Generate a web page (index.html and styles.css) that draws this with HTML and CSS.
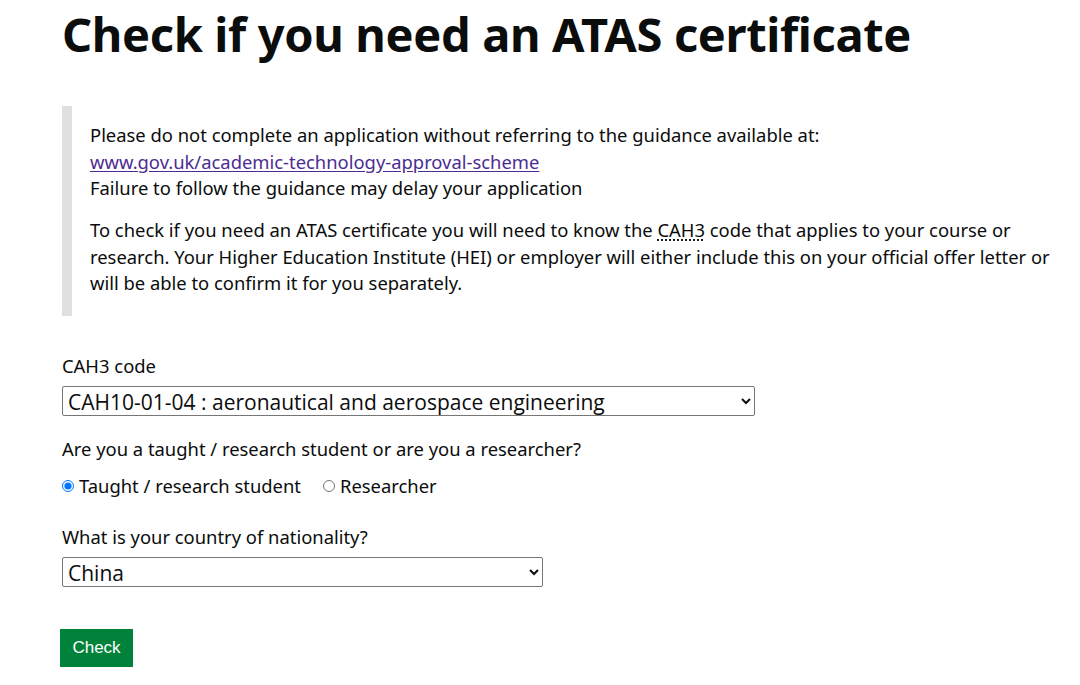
FILE: index.html
```html
<!DOCTYPE html>
<html lang="en">
<head>
<meta charset="utf-8">
<title>Check if you need an ATAS certificate</title>
<link rel="stylesheet" href="styles.css">
</head>
<body>
<main class="page">
  <h1 class="title">Check if you need an ATAS certificate</h1>
  <div class="inset">
    <p class="para">Please do not complete an application without referring to the guidance available at:<br>
    <a class="link" href="#">www.gov.uk/academic-technology-approval-scheme</a><br>
    Failure to follow the guidance may delay your application</p>
    <p class="para">To check if you need an ATAS certificate you will need to know the <span class="abbr" title="Common Aggregation Hierarchy">CAH3</span> code that applies to your course or research. Your Higher Education Institute (HEI) or employer will either include this on your official offer letter or will be able to confirm it for you separately.</p>
  </div>
  <form class="form">
    <div class="field field-cah">
      <label class="label" for="cah">CAH3 code</label>
      <select class="select select-wide" id="cah">
        <option>CAH10-01-04 : aeronautical and aerospace engineering</option>
      </select>
    </div>
    <div class="field field-role">
      <div class="label">Are you a taught / research student or are you a researcher?</div>
      <div class="radios">
        <label class="radio"><input type="radio" name="role" checked> Taught / research student</label>
        <label class="radio"><input type="radio" name="role"> Researcher</label>
      </div>
    </div>
    <div class="field field-nat">
      <label class="label" for="nat">What is your country of nationality?</label>
      <select class="select select-mid" id="nat">
        <option>China</option>
      </select>
    </div>
    <button class="button" type="button">Check</button>
  </form>
</main>
</body>
</html>
```
FILE: styles.css
```css
html, body {
  margin: 0;
  padding: 0;
  background: #ffffff;
}
body {
  font-family: "Noto Sans", "Liberation Sans", sans-serif;
  color: #0b0c0c;
}
.page {
  padding: 0 20px 0 62px;
  display: flex;
  flex-direction: column;
  align-items: flex-start;
}
.title {
  margin: 7px 0 0;
  font-size: 47px;
  line-height: 55px;
  font-weight: 700;
  letter-spacing: -0.35px;
}
.inset {
  margin-top: 44px;
  border-left: 10px solid #dee0e2;
  padding: 16px 0 19px 18px;
  width: 960px;
}
.para {
  margin: 0;
  font-size: 18.4px;
  line-height: 26.5px;
}
.para + .para {
  margin-top: 15.5px;
}
.link {
  color: #4c2c92;
  text-decoration: underline;
  text-underline-offset: 2px;
}
.abbr {
  text-decoration: underline dotted;
  text-underline-offset: 3px;
}
.form {
  margin-top: 38px;
  display: flex;
  flex-direction: column;
  align-items: flex-start;
}
.field {
  display: flex;
  flex-direction: column;
  align-items: flex-start;
}
.label {
  font-size: 18.4px;
  line-height: 24px;
  margin-bottom: 8px;
}
.select {
  font-family: "Open Sans", "Noto Sans", sans-serif;
  font-size: 21px;
  height: 30px;
  padding: 0 0 0 1px;
  border: 1px solid #767676;
  border-radius: 2px;
  background: #ffffff;
  color: #0b0c0c;
}
.select-wide { width: 693px; }
.select-mid { width: 481px; }
.field-role { margin-top: 21px; }
.radios {
  display: flex;
  gap: 22px;
  font-size: 18.4px;
  line-height: 24px;
  margin-top: 5px;
}
.radio {
  display: flex;
  align-items: center;
  gap: 5px;
}
.radio input {
  margin: 0;
  width: 12px;
  height: 12px;
}
.field-nat { margin-top: 27px; }
.button {
  margin-top: 42px;
  margin-left: -2px;
  font-family: "Liberation Sans", Arial, sans-serif;
  font-size: 17px;
  color: #ffffff;
  background: #00823b;
  border: 0;
  border-radius: 0;
  box-shadow: 0 2px 0 #002d18;
  width: 73px;
  height: 38px;
  padding: 0;
}
```
